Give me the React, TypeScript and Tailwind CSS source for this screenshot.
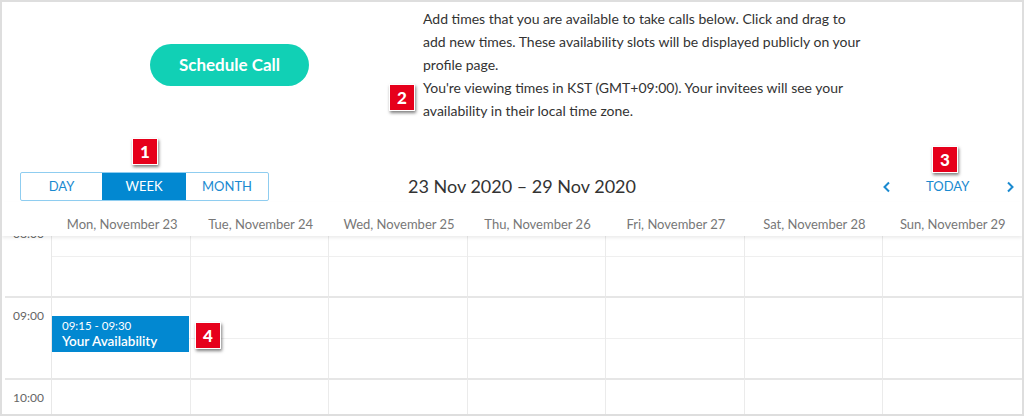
import React from "react";

const days = [
  "Mon, November 23",
  "Tue, November 24",
  "Wed, November 25",
  "Thu, November 26",
  "Fri, November 27",
  "Sat, November 28",
  "Sun, November 29",
];

const hours = ["08:00", "09:00", "10:00"];

function Badge({ n, className }: { n: number; className: string }) {
  return (
    <div
      className={
        "absolute z-20 flex h-[27px] w-[26px] items-center justify-center border border-white bg-[#e6001b] text-[17px] font-black leading-none text-white shadow-[1px_2px_3px_rgba(0,0,0,0.5)] " +
        className
      }
    >
      {n}
    </div>
  );
}

export default function App() {
  return (
    <div className="relative flex h-[416px] w-[1024px] flex-col overflow-hidden border-2 border-[#dedede] bg-white font-['Lato','Open_Sans',sans-serif] text-[#333]">
      {/* top */}
      <div className="flex h-[170px] shrink-0">
        <div className="w-[421px] shrink-0">
          <button className="ml-[148px] mt-[42px] flex h-[42px] w-[159px] items-center justify-center rounded-full bg-[#11d0b5] text-[17px] font-bold text-white">
            Schedule Call
          </button>
        </div>
        <p className="mt-[5px] whitespace-nowrap text-[14px] leading-[23px] text-[#333]">
          Add times that you are available to take calls below. Click and drag to
          <br />
          add new times. These availability slots will be displayed publicly on your
          <br />
          profile page.
          <br />
          You're viewing times in KST (GMT+09:00). Your invitees will see your
          <br />
          availability in their local time zone.
        </p>
      </div>

      {/* toolbar */}
      <div className="flex h-[29px] shrink-0 items-center">
        <div className="ml-[18px] flex h-[29px] w-[249px] overflow-hidden rounded-[2px] border border-[#8fcdf0] text-[13px] uppercase">
          <div className="flex w-[81px] items-center justify-center text-[#1a8ad0]">Day</div>
          <div className="flex w-[84px] items-center justify-center bg-[#0288d1] text-white">Week</div>
          <div className="flex flex-1 items-center justify-center text-[#1a8ad0]">Month</div>
        </div>
        <div className="w-[506px] shrink-0 text-center text-[18px] text-[#333]">
          23 Nov 2020 – 29 Nov 2020
        </div>
        <div className="flex flex-1 items-center text-[13px] text-[#1a8ad0]">
          <svg width="10" height="12" viewBox="0 0 10 12" className="ml-[107px]">
            <path d="M7 1.5 L2.5 6 L7 10.5" fill="none" stroke="#1a8ad0" strokeWidth="2" />
          </svg>
          <span className="ml-[34px]">TODAY</span>
          <svg width="10" height="12" viewBox="0 0 10 12" className="ml-[36px]">
            <path d="M3 1.5 L7.5 6 L3 10.5" fill="none" stroke="#1a8ad0" strokeWidth="2" />
          </svg>
        </div>
      </div>

      {/* header */}
      <div className="relative z-10 mt-[1px] flex h-[34px] shrink-0 bg-white shadow-[0_2px_3px_rgba(0,0,0,0.08)]">
        <div className="w-[51px] shrink-0" />
        <div className="grid flex-1 grid-cols-7">
          {days.map((d) => (
            <div key={d} className="pt-[12px] text-center text-[13px] leading-[20px] text-[#777]">
              {d}
            </div>
          ))}
        </div>
      </div>

      {/* body */}
      <div className="relative flex-1 overflow-hidden">
        <div className="-mt-[22px]">
          {hours.map((h) => (
            <div key={h} className="flex h-[82px]">
              <div className="w-[50px] shrink-0 border-r border-[#e8e8e8]">
                <div className="ml-[3px] h-full border-t-2 border-[#e6e6e6] pt-[10px] pl-[8px] text-[12px] leading-[16px] text-[#666]">
                  {h}
                </div>
              </div>
              <div className="grid flex-1 grid-cols-7">
                {days.map((d, i) => (
                  <div
                    key={d}
                    className={
                      "relative flex flex-col border-t-2 border-[#e6e6e6] " +
                      (i < 6 ? "border-r border-r-[#ebebeb]" : "")
                    }
                  >
                    <div className="h-[40px]" />
                    <div className="flex-1 border-t border-[#efefef]" />
                    {h === "09:00" && i === 0 && (
                      <div className="absolute left-0 right-[1px] top-[18px] z-10 h-[36px] bg-[#0288d1] px-[10px] pt-[2px] text-white">
                        <div className="text-[11.5px] leading-[15px]">09:15 - 09:30</div>
                        <div className="text-[13.5px] font-semibold leading-[17px]">Your Availability</div>
                      </div>
                    )}
                  </div>
                ))}
              </div>
            </div>
          ))}
        </div>
      </div>

      <Badge n={1} className="left-[130px] top-[136px]" />
      <Badge n={2} className="left-[387px] top-[82px]" />
      <Badge n={3} className="left-[930px] top-[144px]" />
      <Badge n={4} className="left-[193px] top-[320px]" />
    </div>
  );
}
